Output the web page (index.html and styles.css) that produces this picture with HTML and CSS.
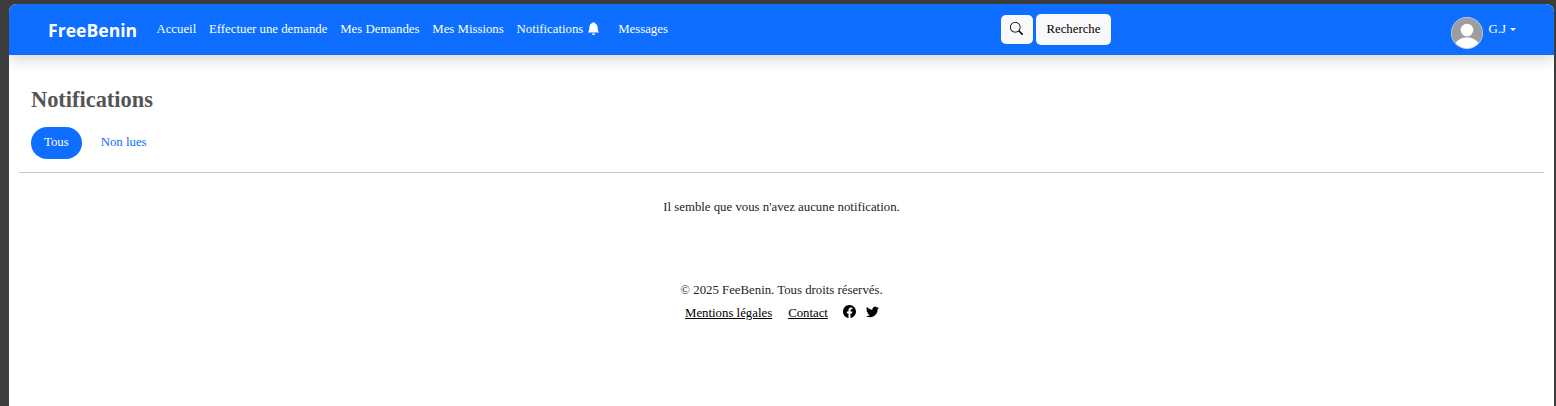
FILE: index.html
```html
<!DOCTYPE html>
<html lang="fr">
<head>
<meta charset="utf-8">
<title>Notifications</title>
<link rel="stylesheet" href="styles.css">
</head>
<body>
<div class="window">
  <header class="navbar">
    <a class="brand">FreeBenin</a>
    <nav class="nav">
      <a>Accueil</a>
      <a>Effectuer une demande</a>
      <a>Mes Demandes</a>
      <a>Mes Missions</a>
      <a class="bell-link">Notifications <svg class="bell" viewBox="0 0 16 16"><path d="M8 16a2 2 0 0 0 2-2H6a2 2 0 0 0 2 2m.995-14.901a1 1 0 1 0-1.99 0A5 5 0 0 0 3 6c0 1.098-.5 6-2 7h14c-1.500-1-2-5.902-2-7 0-2.420-1.720-4.440-4.005-4.901"/></svg></a>
      <a>Messages</a>
    </nav>
    <div class="search">
      <button class="btn icon-btn"><svg viewBox="0 0 16 16"><path d="M11.742 10.344a6.500 6.500 0 1 0-1.397 1.398l3.850 3.850a1 1 0 0 0 1.415-1.414l-3.850-3.850zM12 6.500a5.500 5.500 0 1 1-11 0 5.500 5.500 0 0 1 11 0"/></svg></button>
      <button class="btn text-btn">Recherche</button>
    </div>
    <div class="user">
      <svg class="avatar" viewBox="0 0 32 32"><defs><clipPath id="disc"><circle cx="16" cy="16" r="15.300"/></clipPath></defs><circle cx="16" cy="16" r="16" fill="#c5d5ee"/><g clip-path="url(#disc)"><rect width="32" height="32" fill="#9b9da1"/><circle cx="16" cy="13" r="6.300" fill="#fff"/><ellipse cx="16" cy="29.500" rx="12.200" ry="9.300" fill="#fff"/></g></svg>
      <span>G.J</span><i class="caret"></i>
    </div>
  </header>
  <main>
    <div class="heading">
      <h1>Notifications</h1>
      <div class="tabs"><a class="tab active">Tous</a><a class="tab">Non lues</a></div>
    </div>
    <hr>
    <p class="empty">Il semble que vous n'avez aucune notification.</p>
  </main>
  <footer>
    <p>© 2025 FeeBenin. Tous droits réservés.</p>
    <div class="links">
      <a>Mentions légales</a>
      <a class="contact">Contact</a>
      <svg class="social facebook" viewBox="0 0 16 16"><path d="M16 8.049c0-4.446-3.582-8.050-8-8.050C3.580 0-.002 3.603-.002 8.050c0 4.017 2.926 7.347 6.750 7.951v-5.625h-2.030V8.050H6.750V6.275c0-2.017 1.195-3.131 3.022-3.131.876 0 1.791.157 1.791.157v1.980h-1.009c-.993 0-1.303.621-1.303 1.258v1.510h2.218l-.354 2.326H9.250V16c3.824-.604 6.750-3.934 6.750-7.951"/></svg>
      <svg class="social" viewBox="0 0 16 16"><path d="M5.026 15c6.038 0 9.341-5.003 9.341-9.334q.002-.211-.006-.422A6.700 6.700 0 0 0 16 3.542a6.700 6.700 0 0 1-1.889.518 3.300 3.300 0 0 0 1.447-1.817 6.500 6.500 0 0 1-2.087.793A3.286 3.286 0 0 0 7.875 6.030a9.320 9.320 0 0 1-6.767-3.429 3.290 3.290 0 0 0 1.018 4.382A3.300 3.300 0 0 1 .64 6.575v.045a3.290 3.290 0 0 0 2.632 3.218 3.200 3.200 0 0 1-.865.115 3 3 0 0 1-.614-.057 3.280 3.280 0 0 0 3.067 2.277A6.600 6.600 0 0 1 .780 13.580a6 6 0 0 1-.780-.045A9.340 9.340 0 0 0 5.026 15"/></svg>
    </div>
  </footer>
</div>
</body>
</html>
```
FILE: styles.css
```css
* { box-sizing: border-box; }
body {
  margin: 0;
  height: 406px;
  padding: 4px 2px 0 9px;
  overflow: hidden;
  background: #3c3c3c;
  font: 12.8px/19.2px "Liberation Serif", "Times New Roman", serif;
  color: #212529;
}
.window { height: 402px; background: #fff; border-radius: 8px 8px 0 0; overflow: hidden; }
.navbar {
  display: flex;
  align-items: center;
  height: 51px;
  padding: 0 38px 0 39px;
  background: #0d6eff;
  color: #fff;
  box-shadow: 0 6.4px 12.8px rgba(0, 0, 0, .15);
}
.brand { width: 89px; margin: 0 19.4px 0 0; font: bold 17.6px/24px "Open Sans", "Noto Sans", sans-serif; white-space: nowrap; }
.nav { display: flex; gap: 12.8px; white-space: nowrap; }
.bell-link { display: flex; align-items: center; gap: 4px; margin-right: 5px; }
.bell { width: 13px; height: 13px; fill: #fff; margin-top: -1px; }
.search { display: flex; align-items: center; gap: 3px; margin: 0 auto 0 333px; }
.btn { height: 31px; border: 0; border-radius: 5px; background: #f8f9fa; color: #000; font: inherit; padding: 0; }
.icon-btn { display: grid; place-items: center; width: 32px; height: 29px; }
.icon-btn svg { width: 13px; height: 13px; margin-top: -2px; }
.text-btn { width: 75px; }
.user { display: flex; align-items: center; }
.avatar { width: 32px; height: 32px; margin: 7px 6px 0 0; }
.caret { margin: 0 0 0 4px; border: 3px solid transparent; border-top-color: #fff; border-bottom: 0; }
main { padding: 31px 10px 0; }
.heading { padding-left: 12px; }
h1 { margin: 0; font-size: 22.4px; line-height: 27px; color: #555; }
.tabs { display: flex; gap: 6px; margin-top: 14px; }
.tab { height: 32px; padding: 6px 13px; border-radius: 16px; color: #0d6eff; }
.active { background: #0d6eff; color: #fff; }
hr { height: 1px; margin: 13px 0 25px; border: 0; background: #c8c8c8; }
.empty { margin: 0; text-align: center; }
footer { margin-top: 64px; text-align: center; }
footer p { margin: 0; }
.links { display: flex; justify-content: center; align-items: center; margin-top: 4px; padding-left: 1px; color: #000; }
.links a { text-decoration: underline; }
.contact { margin-left: 16px; }
.social { width: 13px; height: 13px; margin: -5px 0 0 9.5px; }
.facebook { margin-left: 15.5px; }
```
